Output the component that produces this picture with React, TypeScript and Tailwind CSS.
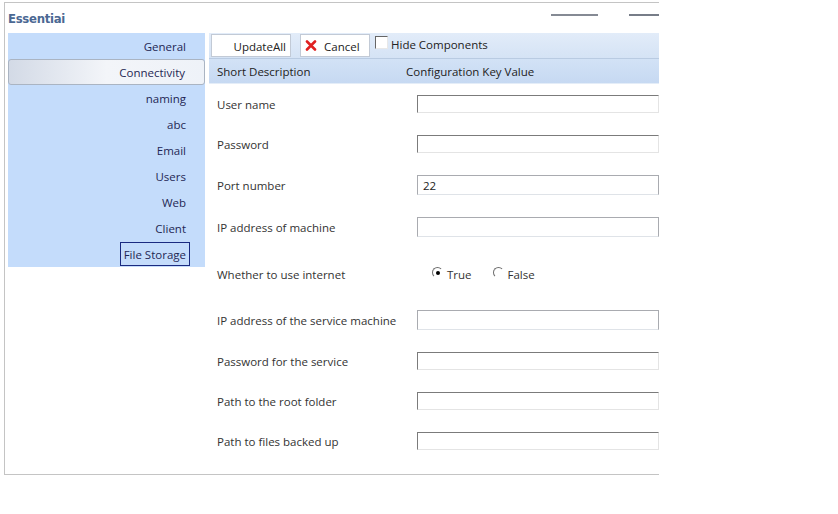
import React from "react";

const navItems = ["General", "Connectivity", "naming", "abc", "Email", "Users", "Web", "Client", "File Storage"];

type Row = { label: string; h: string; kind: "inset" | "flat" | "radio"; value?: string };

const rows: Row[] = [
  { label: "User name", h: "h-[40px]", kind: "inset" },
  { label: "Password", h: "h-[40px]", kind: "inset" },
  { label: "Port number", h: "h-[41px]", kind: "flat", value: "22" },
  { label: "IP address of machine", h: "h-[43px]", kind: "flat" },
  { label: "Whether to use internet", h: "h-[51px]", kind: "radio" },
  { label: "IP address of the service machine", h: "h-[42px]", kind: "flat" },
  { label: "Password for the service", h: "h-[40px]", kind: "inset" },
  { label: "Path to the root folder", h: "h-[40px]", kind: "inset" },
  { label: "Path to files backed up", h: "h-[40px]", kind: "inset" },
];

function Radio({ checked, label }: { checked?: boolean; label: string }) {
  return (
    <span className="flex items-center">
      <span className="w-[11px] h-[11px] rounded-full border border-t-[#6d6d6d] border-l-[#6d6d6d] border-r-white border-b-white bg-white flex items-center justify-center -mt-[2px]">
        {checked && <span className="w-[4px] h-[4px] rounded-full bg-black" />}
      </span>
      <span className="ml-[4px] mt-[3px]">{label}</span>
    </span>
  );
}

function Field({ row }: { row: Row }) {
  if (row.kind === "radio") {
    return (
      <div className="flex items-center pl-[15px] gap-[21px]">
        <Radio checked label="True" />
        <Radio label="False" />
      </div>
    );
  }
  if (row.kind === "flat") {
    return (
      <div className="w-[260px] h-[20px] bg-white border border-[#a9abb0] border-b-[#dfe3e8] pl-[5px] leading-[19px] text-[#222]">
        {row.value}
      </div>
    );
  }
  return <div className="w-[260px] h-[18px] bg-white border border-t-[#7b7b7b] border-l-[#7b7b7b] border-r-[#e4e4e4] border-b-[#e4e4e4]" />;
}

export default function App() {
  return (
    <div className="w-[838px] h-[514px] bg-white text-[11.5px] text-[#333] font-['Open_Sans',sans-serif] overflow-hidden">
      <div className="ml-[4px] mt-[2px] w-[655px] h-[473px] border-l border-t border-b border-[#c4c4c4] overflow-hidden">
        {/* title strip */}
        <div className="h-[30px] flex items-start">
          <span className="ml-[3px] mt-[8px] text-[13px] leading-[16px] font-bold text-[#4b6893] font-['DejaVu_Sans_Condensed','DejaVu_Sans',sans-serif] tracking-[-0.3px]">
            Essentiai
          </span>
          <div className="flex-1" />
          <div className="w-[47px] h-[2px] mt-[11px] bg-[#858a94]" />
          <div className="w-[30px] h-[2px] mt-[11px] ml-[31px] bg-[#777d88]" />
        </div>

        <div className="flex pl-[3px] gap-[4px]">
          {/* side nav */}
          <div className="w-[197px] shrink-0 bg-[#c4dcfb] self-start">
            {navItems.map((n) => (
              <div
                key={n}
                className={
                  n === "Connectivity"
                    ? "h-[26px] flex items-center justify-end pr-[15px] rounded-[3px] border border-[#aab4c2] bg-gradient-to-r from-[#d3dae6] via-[#f3f5f9] to-[#eef2f8] text-[#1f2754]"
                    : "h-[26px] flex items-center justify-end pr-[15px] text-[#1f2754]"
                }
              >
                <span
                  className={
                    n === "File Storage"
                      ? "border border-[#1a2a80] px-[3px] pt-[2px] leading-[20px]"
                      : "border border-transparent px-[3px] pt-[2px] leading-[20px]"
                  }
                >
                  {n}
                </span>
              </div>
            ))}
          </div>

          {/* main */}
          <div className="flex-1 min-w-0">
            <div className="h-[26px] flex items-start pl-[2px] pt-[1px] bg-gradient-to-b from-[#e2ecf9] to-[#d5e3f5] border-b border-[#b9cbe2]">
              <button className="h-[23px] w-[80px] bg-white border border-[#c2cad6] flex items-center justify-end pr-[4px] pt-[2px] text-[#222]">
                UpdateAll
              </button>
              <button className="ml-[9px] h-[23px] w-[70px] bg-white border border-[#c2cad6] flex items-center pl-[4px] text-[#222]">
                <svg width="12" height="11" viewBox="0 0 12 11" className="mr-[7px]">
                  <path d="M2 1.5 L10 9.5 M10 1.5 L2 9.5" stroke="#e02020" strokeWidth="2.6" strokeLinecap="round" />
                </svg>
                <span className="pt-[2px]">Cancel</span>
              </button>
              <span className="ml-[5px] mt-[2px] w-[13px] h-[13px] bg-white border border-t-[#666] border-l-[#666] border-r-[#e8e8e8] border-b-[#e8e8e8]" />
              <span className="ml-[3px] mt-[3px] leading-[16px] text-[#222]">Hide Components</span>
            </div>
            <div className="h-[25px] flex items-center pt-[2px] bg-gradient-to-b from-[#d2e2f6] to-[#c6d9f2] text-[#222] border-b border-[#e4edf8]">
              <span className="pl-[8px] w-[197px]">Short Description</span>
              <span>Configuration Key Value</span>
            </div>
            {rows.map((r) => (
              <div key={r.label} className={`${r.h} flex items-center`}>
                <span className="pl-[8px] w-[208px] shrink-0 pt-[2px]">{r.label}</span>
                <Field row={r} />
              </div>
            ))}
          </div>
        </div>
      </div>
    </div>
  );
}
